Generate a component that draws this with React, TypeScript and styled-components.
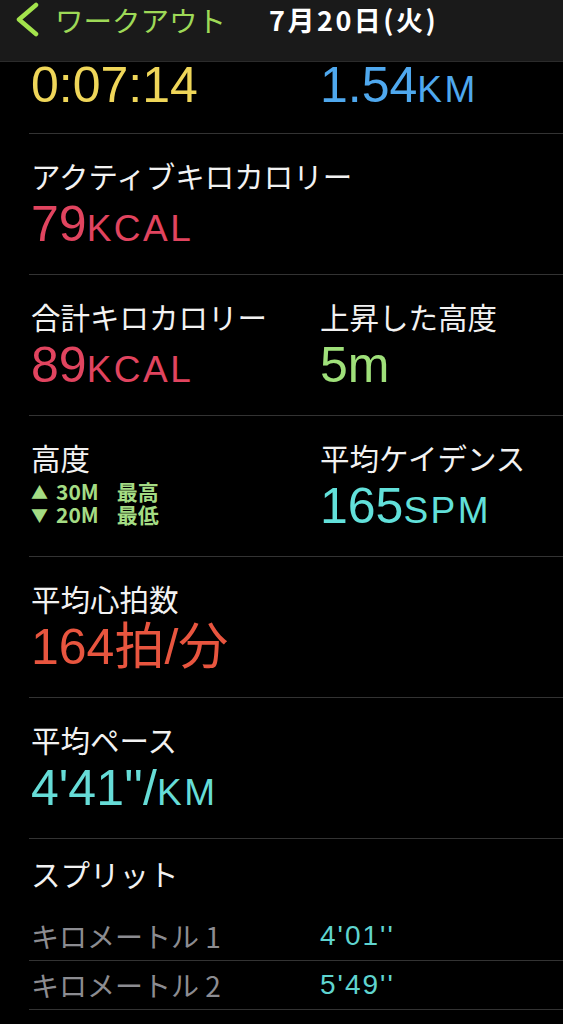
import React from "react";
import styled, {createGlobalStyle} from "styled-components";

const GlobalStyle = createGlobalStyle`
    html, body {
        margin: 0;
        padding: 0;
        background: #000000;
    }
`

type MetricType = {
    label?: string
    value: string
    unit?: string
    color: string
}

// the first row is scrolled under the nav bar, only its values still show
const topRow: MetricType[] = [
    {value: '0:07:14', color: '#efd659'},
    {value: '1.54', unit: 'KM', color: '#4fa8ee'},
]

const rows: MetricType[][] = [
    [
        {label: 'アクティブキロカロリー', value: '79', unit: 'KCAL', color: '#e1445f'},
    ],
    [
        {label: '合計キロカロリー', value: '89', unit: 'KCAL', color: '#e1445f'},
        {label: '上昇した高度', value: '5m', color: '#9fe07a'},
    ],
]

const splits = [
    {label: 'キロメートル 1', time: "4'01''"},
    {label: 'キロメートル 2', time: "5'49''"},
]

const Metric: React.FC<{metric: MetricType}> = function ({metric}) {
    return (
        <Cell>
            {metric.label && <Label>{metric.label}</Label>}
            <Value color={metric.color}>
                {metric.value}
                {metric.unit && <Unit>{metric.unit}</Unit>}
            </Value>
        </Cell>
    )
}

const App = function () {
    return (
        <Screen>
            <GlobalStyle/>
            <NavBar>
                <BackButton>
                    <svg width="24" height="36" viewBox="0 0 24 36">
                        <path d="M21 3 L4 17.5 L21 32" fill="none" stroke="#a3e34c" strokeWidth="4.5"
                              strokeLinecap="round" strokeLinejoin="round"/>
                    </svg>
                    <BackLabel>ワークアウト</BackLabel>
                </BackButton>
                <NavTitle>7月20日(火)</NavTitle>
            </NavBar>
            <Scroller>
                <TopRow>
                    {topRow.map(m => <Metric key={m.value} metric={m}/>)}
                </TopRow>
                {rows.map((row, i) => (
                    <Row key={i}>
                        {row.map(m => <Metric key={m.value} metric={m}/>)}
                    </Row>
                ))}
                <Row>
                    <Cell>
                        <Label>高度</Label>
                        <AltLine>
                            <Arrow>▲</Arrow><Amount>30M</Amount><Kind>最高</Kind>
                        </AltLine>
                        <AltLine>
                            <Arrow>▼</Arrow><Amount>20M</Amount><Kind>最低</Kind>
                        </AltLine>
                    </Cell>
                    <Metric metric={{label: '平均ケイデンス', value: '165', unit: 'SPM', color: '#62e0da'}}/>
                </Row>
                <Row>
                    <Metric metric={{label: '平均心拍数', value: '164拍/分', color: '#e8553f'}}/>
                </Row>
                <Row>
                    <Metric metric={{label: '平均ペース', value: "4'41''/", unit: 'KM', color: '#66dcd7'}}/>
                </Row>
                <SplitHeader>
                    <Label>スプリット</Label>
                </SplitHeader>
                {splits.map(s => (
                    <SplitRow key={s.label}>
                        <SplitLabel>{s.label}</SplitLabel>
                        <SplitTime>{s.time}</SplitTime>
                    </SplitRow>
                ))}
            </Scroller>
        </Screen>
    )
}

export default App

const Screen = styled.div`
    width: 563px;
    height: 1024px;
    background: #000000;
    display: flex;
    flex-direction: column;
    overflow: hidden;
    font-family: "Noto Sans CJK JP", "Noto Sans", sans-serif;
`
const NavBar = styled.header`
    flex: 0 0 62px;
    box-sizing: border-box;
    display: flex;
    align-items: flex-start;
    padding-left: 15px;
    background: #1a1a1a;
    border-bottom: 1px solid #2b2b2b;
`
const BackButton = styled.div`
    display: flex;
    align-items: center;
    height: 40px;
    gap: 16px;
`
const BackLabel = styled.span`
    color: #9ed957;
    font-size: 28.5px;
    line-height: 40px;
`
const NavTitle = styled.span`
    margin-left: 43px;
    color: #ffffff;
    font-size: 27px;
    font-weight: 700;
    letter-spacing: 2.5px;
    line-height: 40px;
`
const Scroller = styled.div`
    flex: 1;
    overflow: hidden;
`
const Value = styled.div<{color: string}>`
    height: 52px;
    color: ${props => props.color};
    font-family: "Liberation Sans", "Noto Sans CJK JP", sans-serif;
    font-size: 50px;
    line-height: 52px;
    white-space: nowrap;
`
const Unit = styled.span`
    font-size: 37px;
    letter-spacing: 2.5px;
`
const Row = styled.div`
    display: grid;
    grid-template-columns: 289px 1fr;
    margin-left: 29px;
    padding: 24px 0 24px 2px;
    border-bottom: 1px solid #333333;
`
const TopRow = styled(Row)`
    padding: 0 0 25px 2px;

    ${Value} {
        height: 46px;
        line-height: 46px;
    }
`
const Cell = styled.div`
    display: flex;
    flex-direction: column;
`
const Label = styled.div`
    margin-bottom: 6px;
    color: #f2f2f2;
    font-size: 29.5px;
    line-height: 34px;
    white-space: nowrap;
`
const AltLine = styled.div`
    display: flex;
    align-items: center;
    height: 23px;
    color: #a4dc84;
    font-size: 21px;
    font-weight: 700;
    line-height: 23px;
    &:first-of-type {
        margin-top: 3px;
    }
`
const Arrow = styled.span`
    width: 16px;
    font-size: 17px;
`
const Amount = styled.span`
    margin-left: 9px;
`
const Kind = styled.span`
    margin-left: 18px;
`
const SplitHeader = styled.div`
    margin-left: 29px;
    padding: 17px 0 16px 2px;
`
const SplitRow = styled.div`
    display: grid;
    grid-template-columns: 289px 1fr;
    align-items: center;
    height: 48px;
    margin-left: 29px;
    padding-left: 2px;
    border-bottom: 1px solid #333333;
`
const SplitLabel = styled.span`
    color: #8c8c91;
    font-size: 28px;
`
const SplitTime = styled.span`
    color: #5fd4cf;
    font-family: "Liberation Sans", sans-serif;
    font-size: 28px;
    letter-spacing: 2px;
`
